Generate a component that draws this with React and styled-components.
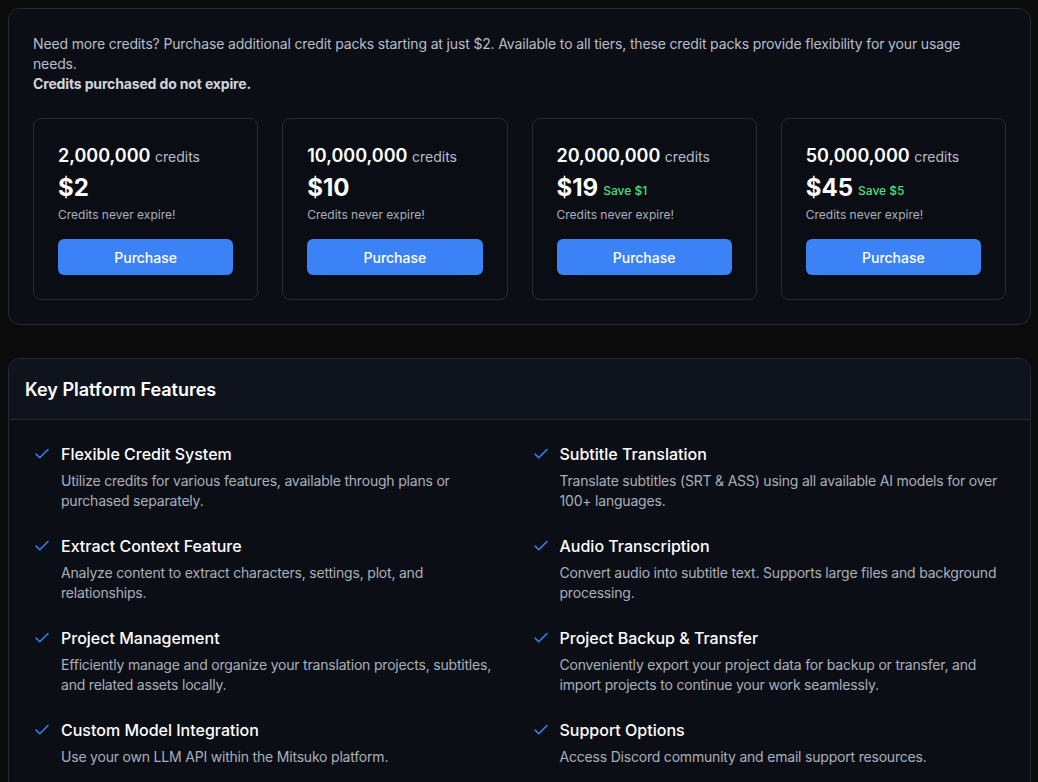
import React from "react";
import styled, { createGlobalStyle } from "styled-components";

const Global = createGlobalStyle`
  body { margin: 0; background: #0b0b0c; font-family: Inter, "Noto Sans", sans-serif; color: #e5e7eb; }
`;
const Page = styled.div`
  padding: 8px 7px 8px 8px; display: flex; flex-direction: column; gap: 33px;
`;
const Panel = styled.section`
  background: #0b0e15; border: 1px solid #262b36; border-radius: 12px;
`;
const TopPanel = styled(Panel)`
  padding: 25px 24px 24px 24px;
`;
const Intro = styled.p`
  margin: 0; font-size: 14px; line-height: 20px; color: #b8bec9; letter-spacing: -0.15px;
  b { display: block; color: #d1d5db; font-weight: 700; }
`;
const Grid = styled.div`
  display: grid; grid-template-columns: repeat(4, 1fr); gap: 24px; margin-top: 24px;
`;
const Card = styled.div`
  border: 1px solid #262b36; border-radius: 8px; padding: 25px 24px 24px 24px; background: #0a0d14;
`;
const Credits = styled.div`
  font-size: 18px; font-weight: 600; color: #fff; line-height: 24px;
  span { font-size: 14px; font-weight: 400; color: #b8bec9; }
`;
const Price = styled.div`
  margin-top: 4px; font-size: 24px; font-weight: 700; color: #fff; height: 30px; line-height: 30px;
  display: flex; align-items: center; gap: 5px;
`;
const Save = styled.span`
  font-size: 12px; font-weight: 500; color: #4ade80; line-height: 14px; margin-top: 6px;
`;
const Note = styled.div`
  margin-top: 4px; font-size: 12px; color: #aab0bb; line-height: 16px;
`;
const Button = styled.button`
  margin-top: 16px; width: 100%; height: 36px; border: none; border-radius: 6px;
  background: #3b82f6; color: #fff; font-family: inherit; font-size: 14px; font-weight: 500;
`;
const Header = styled.div`
  height: 60px; padding: 0 16px; display: flex; align-items: center;
  border-bottom: 1px solid #262b36; background: #0e131c; border-radius: 12px 12px 0 0;
  font-size: 18px; font-weight: 600; color: #fff;
`;
const Features = styled.div`
  display: grid; grid-template-columns: 1fr 1fr; column-gap: 24px; row-gap: 21px;
  padding: 23px 24px 24px 24px;
`;
const Item = styled.div`
  display: flex; gap: 10px; min-height: 71px;
`;
const Title = styled.div`
  font-size: 16px; font-weight: 500; color: #fff; line-height: 22px;
`;
const Desc = styled.div`
  margin-top: 6px; font-size: 14px; line-height: 20px; color: #aab0bb; letter-spacing: -0.2px;
`;
const Check = () => (
  <svg width="18" height="18" viewBox="0 0 24 24" fill="none" stroke="#3b82f6" strokeWidth="2" strokeLinecap="round" strokeLinejoin="round" style={{ marginTop: 2, flexShrink: 0 }}>
    <path d="M20 6 9 17l-5-5" />
  </svg>
);

const packs = [
  ["2,000,000", "$2"], ["10,000,000", "$10"], ["20,000,000", "$19", "Save $1"], ["50,000,000", "$45", "Save $5"],
];
const feats = [
  ["Flexible Credit System", "Utilize credits for various features, available through plans or purchased separately."],
  ["Subtitle Translation", "Translate subtitles (SRT & ASS) using all available AI models for over 100+ languages."],
  ["Extract Context Feature", "Analyze content to extract characters, settings, plot, and relationships."],
  ["Audio Transcription", "Convert audio into subtitle text. Supports large files and background processing."],
  ["Project Management", "Efficiently manage and organize your translation projects, subtitles, and related assets locally."],
  ["Project Backup & Transfer", "Conveniently export your project data for backup or transfer, and import projects to continue your work seamlessly."],
  ["Custom Model Integration", "Use your own LLM API within the Mitsuko platform."],
  ["Support Options", "Access Discord community and email support resources."],
];

export default function App() {
  return (
    <Page>
      <Global />
      <TopPanel>
        <Intro>Need more credits? Purchase additional credit packs starting at just $2. Available to all tiers, these credit packs provide flexibility for your usage needs. <b>Credits purchased do not expire.</b></Intro>
        <Grid>
          {packs.map(([c, p, s]) => (
            <Card key={c}>
              <Credits>{c} <span>credits</span></Credits>
              <Price>{p}{s && <Save>{s}</Save>}</Price>
              <Note>Credits never expire!</Note>
              <Button>Purchase</Button>
            </Card>
          ))}
        </Grid>
      </TopPanel>
      <Panel>
        <Header>Key Platform Features</Header>
        <Features>
          {feats.map(([t, d]) => (
            <Item key={t}>
              <Check />
              <div><Title>{t}</Title><Desc>{d}</Desc></div>
            </Item>
          ))}
        </Features>
      </Panel>
    </Page>
  );
}
